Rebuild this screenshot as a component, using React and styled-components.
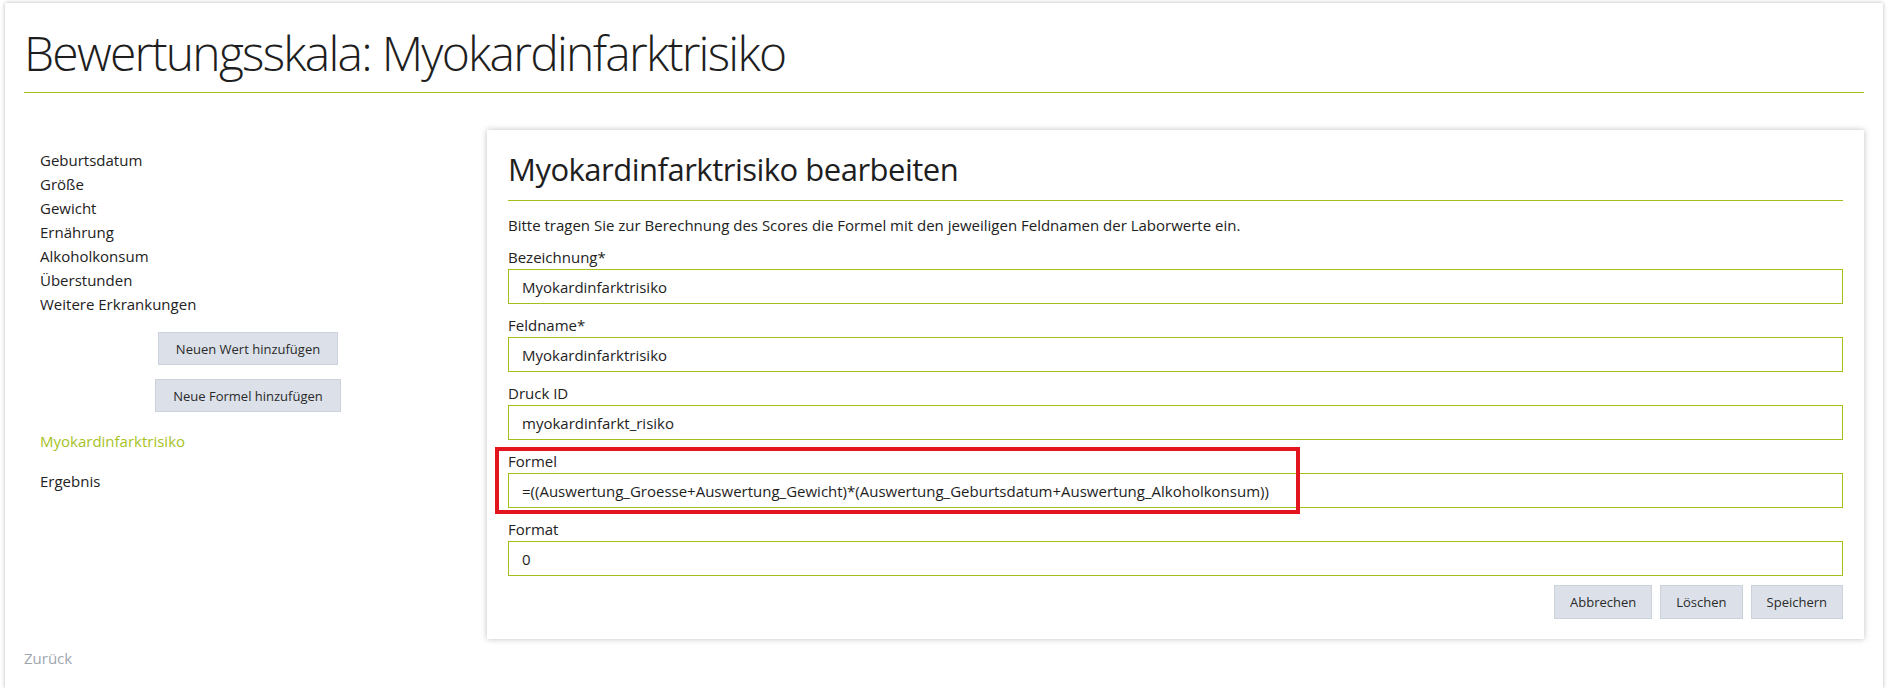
import React from 'react'
import styled, { createGlobalStyle } from 'styled-components'

const GlobalStyle = createGlobalStyle`
  html, body {
    margin: 0;
    padding: 0;
    background: #fff;
  }
  body {
    font-family: "Segoe UI", "Open Sans", "Noto Sans", sans-serif;
    color: #222;
  }
  * {
    box-sizing: border-box;
  }
`

const GREEN = '#a3bf1c'

const fields = [
  { label: 'Bezeichnung*', value: 'Myokardinfarktrisiko' },
  { label: 'Feldname*', value: 'Myokardinfarktrisiko' },
  { label: 'Druck ID', value: 'myokardinfarkt_risiko' },
  {
    label: 'Formel',
    value: '=((Auswertung_Groesse+Auswertung_Gewicht)*(Auswertung_Geburtsdatum+Auswertung_Alkoholkonsum))',
    marked: true,
  },
  { label: 'Format', value: '0' },
]

const values = [
  'Geburtsdatum',
  'Größe',
  'Gewicht',
  'Ernährung',
  'Alkoholkonsum',
  'Überstunden',
  'Weitere Erkrankungen',
]

function App() {
  return (
    <>
      <GlobalStyle />
      <Frame>
        <Header>
          <Title>Bewertungsskala: Myokardinfarktrisiko</Title>
        </Header>

        <Body>
          <Sidebar>
            <ValueList>
              {values.map((v) => (
                <ValueItem key={v}>{v}</ValueItem>
              ))}
            </ValueList>
            <SideButtons>
              <GrayButton>Neuen Wert hinzufügen</GrayButton>
              <GrayButton>Neue Formel hinzufügen</GrayButton>
            </SideButtons>
            <SideLink $active>Myokardinfarktrisiko</SideLink>
            <SideLink>Ergebnis</SideLink>
          </Sidebar>

          <Panel>
            <PanelHeader>
              <PanelTitle>Myokardinfarktrisiko bearbeiten</PanelTitle>
            </PanelHeader>
            <Hint>
              Bitte tragen Sie zur Berechnung des Scores die Formel mit den jeweiligen Feldnamen der Laborwerte ein.
            </Hint>
            {fields.map((f) => (
              <Field key={f.label}>
                {f.marked && <Marker />}
                <Label>{f.label}</Label>
                <Input readOnly value={f.value} />
              </Field>
            ))}
            <Actions>
              <GrayButton $small>Abbrechen</GrayButton>
              <GrayButton $small>Löschen</GrayButton>
              <GrayButton $small>Speichern</GrayButton>
            </Actions>
          </Panel>
        </Body>

        <BackLink>Zurück</BackLink>
      </Frame>
    </>
  )
}

const Frame = styled.div`
  margin: 3px 6px 0 5px;
  height: 685px;
  padding: 0 19px;
  background: #fff;
  box-shadow: 0 0 4px rgba(0, 0, 0, 0.28);
`

const Header = styled.div`
  padding-top: 21px;
  padding-bottom: 10px;
  border-bottom: 1px solid ${GREEN};
`

const Title = styled.h1`
  margin: 0;
  font-family: "Segoe UI Light", "Open Sans", sans-serif;
  font-weight: 300;
  font-size: 48px;
  line-height: 58px;
  letter-spacing: -1.75px;
  color: #1e1e1e;
`

const Body = styled.div`
  display: flex;
  align-items: flex-start;
  margin-top: 37px;
`

const Sidebar = styled.div`
  width: 448px;
  flex-shrink: 0;
  padding: 18px 0 0 16px;
  display: flex;
  flex-direction: column;
`

const ValueList = styled.div`
  display: flex;
  flex-direction: column;
`

const ValueItem = styled.div`
  font-size: 15px;
  line-height: 24px;
  color: #222;
`

const SideButtons = styled.div`
  display: flex;
  flex-direction: column;
  align-items: center;
  gap: 14px;
  margin: 16px 0 17px -16px;
`

const GrayButton = styled.button`
  height: ${(p) => (p.$small ? '34px' : '33px')};
  padding: 0 ${(p) => (p.$small ? '15px' : '17px')};
  font-family: inherit;
  font-size: 13px;
  color: #2a2a2a;
  background: #dce1e9;
  border: 1px solid #ccd2da;
  border-radius: 0;
  cursor: pointer;
`

const SideLink = styled.div`
  font-size: 15px;
  line-height: 24px;
  color: ${(p) => (p.$active ? '#a6c21e' : '#222')};
  margin-bottom: 16px;
`

const Panel = styled.div`
  flex: 1;
  margin-left: 15px;
  padding: 19px 21px 20px 21px;
  background: #fff;
  box-shadow: 0 0 6px rgba(0, 0, 0, 0.25);
`

const PanelHeader = styled.div`
  padding-bottom: 11px;
  border-bottom: 1px solid ${GREEN};
`

const PanelTitle = styled.h2`
  margin: 0;
  font-family: "Segoe UI", "Open Sans", sans-serif;
  font-weight: 400;
  font-size: 31px;
  line-height: 40px;
  letter-spacing: -0.5px;
  color: #1e1e1e;
`

const Hint = styled.p`
  margin: 13px 0 0;
  font-size: 15px;
  line-height: 22px;
`

const Field = styled.div`
  position: relative;
  margin-top: 10px;
  &:first-of-type {
    margin-top: 7px;
  }
`

const Marker = styled.div`
  position: absolute;
  left: -13px;
  top: -3px;
  width: 805px;
  height: 67px;
  border: 4px solid #e3161f;
  pointer-events: none;
`

const Label = styled.div`
  font-size: 15px;
  line-height: 22px;
  margin-bottom: 1px;
`

const Input = styled.input`
  display: block;
  width: 100%;
  height: 35px;
  padding: 0 13px;
  font-family: inherit;
  font-size: 15px;
  color: #1e1e1e;
  background: #fff;
  border: 1px solid ${GREEN};
  border-radius: 0;
  outline: none;
`

const Actions = styled.div`
  display: flex;
  justify-content: flex-end;
  gap: 8px;
  margin-top: 9px;
`

const BackLink = styled.div`
  margin-top: 7px;
  font-size: 15px;
  line-height: 24px;
  color: #9ea6ad;
`

export default App
